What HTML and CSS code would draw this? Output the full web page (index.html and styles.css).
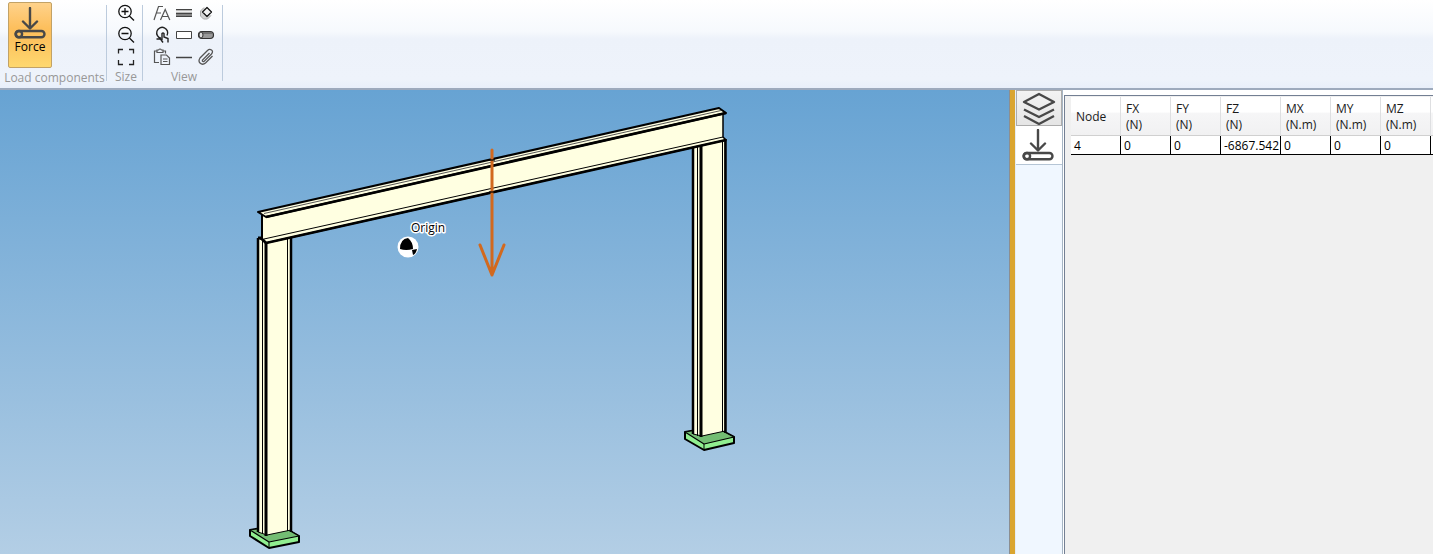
FILE: index.html
```html
<!DOCTYPE html>
<html lang="en">
<head>
<meta charset="utf-8">
<title>Load editor</title>
<link rel="stylesheet" href="styles.css">
</head>
<body>
<svg width="0" height="0" class="defs" aria-hidden="true">
  <symbol id="force" viewBox="0 0 32 32">
    <g fill="none" stroke="#484848" stroke-width="2.4" stroke-linecap="round" stroke-linejoin="round">
      <path d="M16 1V21M9 14.500L16 21.500L23 14.500"/>
      <rect x="1.500" y="24" width="29" height="6.200" rx="3.100"/>
      <circle cx="5" cy="27.100" r="3.100"/>
    </g>
  </symbol>
</svg>
<header class="ribbon">
  <section class="group group-load">
    <div class="group-body">
      <button class="force" type="button"><svg width="32" height="32"><use href="#force"/></svg><span>Force</span></button>
    </div>
    <div class="group-label">Load components</div>
  </section>
  <section class="group group-size">
    <div class="group-body tools">
      <button class="tool" type="button" aria-label="Zoom in"><svg viewBox="0 0 18 18"><g fill="none" stroke="#111" stroke-width="1.300"><circle cx="8" cy="7.500" r="6.200"/><path d="M12.400 12L17 16.500M4.500 7.500H11.500M8 4V11"/></g></svg></button>
      <button class="tool" type="button" aria-label="Zoom out"><svg viewBox="0 0 18 18"><g fill="none" stroke="#111" stroke-width="1.300"><circle cx="8" cy="7.500" r="6.200"/><path d="M12.400 12L17 16.500M4.500 7.500H11.500"/></g></svg></button>
      <button class="tool" type="button" aria-label="Fit"><svg viewBox="0 0 18 18"><path d="M1.500 5.500V1.500H6M12 1.500H16.500V5.500M16.500 12V16.500H12M6 16.500H1.500V12" fill="none" stroke="#222" stroke-width="1.300"/></svg></button>
    </div>
    <div class="group-label">Size</div>
  </section>
  <section class="group group-view">
    <div class="group-body tools tools-view">
      <button class="tool" type="button" aria-label="Text size"><svg viewBox="0 0 18 18"><path d="M1 16L5.500 2.500H10M3.300 9H8M7.500 16L12.200 5.500L16.800 16M9.300 12.500H15" fill="none" stroke="#555" stroke-width="1.200"/></svg></button>
      <button class="tool" type="button" aria-label="Shaded"><svg viewBox="0 0 18 18"><path d="M1 5H17V13H1Z" fill="#858585"/><path d="M1 7.500H17" stroke="#eee" stroke-width="2"/><path d="M1 5.500H17M1 12.500H17M1 9.500H17" stroke="#444"/></svg></button>
      <button class="tool" type="button" aria-label="Node"><svg viewBox="0 0 18 18"><path d="M7 3.500L3.500 7V12L6.500 15H10.500L14 11.500" fill="#d4d4d4" stroke="#aaa"/><path d="M10 3.500L14.500 8L10 12.500L5.500 8Z" fill="#f2f2f2" stroke="#111" stroke-width="1.200" stroke-linejoin="round"/></svg></button>
      <button class="tool" type="button" aria-label="Select"><svg viewBox="0 0 18 18"><g fill="none" stroke="#222" stroke-width="1.400"><path d="M8 12.200A5.500 5.500 0 1 1 14 9.500M3.500 13H7.500"/><path d="M9 14V7.500Q10 6.500 11 7.500V11L15 12.500V16.500M9 13.500L7.500 13L10 16.500"/></g></svg></button>
      <button class="tool" type="button" aria-label="Outline"><svg viewBox="0 0 18 18"><path d="M1.500 5.500H16.500V12.500H1.500Z" fill="#fff" stroke="#444"/></svg></button>
      <button class="tool" type="button" aria-label="Solid"><svg viewBox="0 0 18 18"><rect x="1.500" y="5.500" width="15" height="7" rx="3.500" fill="#999" stroke="#333" stroke-width="1.200"/><path d="M5 7H15" stroke="#666" stroke-width="1.500"/><ellipse cx="4" cy="9" rx="2" ry="3" fill="#ddd" stroke="#333"/></svg></button>
      <button class="tool" type="button" aria-label="Paste"><svg viewBox="0 0 18 18"><g fill="none" stroke="#555" stroke-width="1.200"><path d="M6 14.500H1.500V3H4M10 3H12.500V5.500M4 4.500H10V2H8.500Q7 0 5.500 2H4Z"/><path d="M8 7H13.500L16.500 10V16.500H8ZM10 11H14.500M10 13.500H14.500"/></g></svg></button>
      <button class="tool" type="button" aria-label="Line"><svg viewBox="0 0 18 18"><path d="M1 9.500H17" stroke="#444" stroke-width="1.500"/></svg></button>
      <button class="tool" type="button" aria-label="Attach"><svg viewBox="0 0 18 18"><path d="M12.500 5L5.500 12Q5 14 7 13.500L14.500 6Q16.500 3.500 14.500 2Q12.500 .5 10.500 2.500L3 10Q1 13 3 15Q5.500 17.500 8.500 15L15.500 8" fill="none" stroke="#555" stroke-width="1.300"/></svg></button>
    </div>
    <div class="group-label">View</div>
  </section>
</header>
<main class="workspace">
  <div class="viewport">
    <svg class="scene" viewBox="0 90 1009 464" preserveAspectRatio="xMidYMin slice" role="img" aria-label="Portal frame with a downward force">
      <g stroke="#000" stroke-linejoin="round" stroke-width="2">
        <g id="base-left">
          <path d="M250 530L280 525L299 536V542L269 548L250 536Z" fill="#90ee90"/>
          <path d="M250 530L280 525L299 536L269 542Z" fill="#73bd73" stroke-width="1.200"/>
          <path d="M269 542V548" stroke-width="1"/>
        </g>
        <g id="base-right">
          <path d="M685 432L715 427L734 437V443L704 450L685 439Z" fill="#90ee90"/>
          <path d="M685 432L715 427L734 437L704 444Z" fill="#73bd73" stroke-width="1.200"/>
          <path d="M704 444V450" stroke-width="1"/>
        </g>
        <path d="M258 238L266 242L291 237V530L267 535L258 532Z" fill="#ffffe1" stroke-width="1"/>
        <path d="M258 238V532M291 237V532" stroke-width="2.500"/>
        <path d="M266 242V536" stroke-width="3"/>
        <path d="M262.500 240V534M287.500 238V531" stroke-width="1"/>
        <path d="M693 146L701 146L725 139V431L702 436L693 434Z" fill="#ffffe1" stroke-width="1"/>
        <path d="M693 146V434M725.500 139V433" stroke-width="2.500"/>
        <path d="M701 146V437" stroke-width="3"/>
        <path d="M697.500 147V436M722.500 141V432" stroke-width="1"/>
        <path d="M262 213L723 111V137L726 140L266 243L262 239Z" fill="#ffffe1" stroke-width="1.500"/>
        <path d="M262 214V240" stroke-width="2"/>
        <path d="M264 239L723 137" stroke-width="1"/>
        <path d="M258 238L261 238L266 243L726 140" fill="none" stroke-width="2.800"/>
        <path d="M258 212L719 108L726 113L266 217Z" fill="#ffffe1"/>
        <path d="M264 213.500L721 110.500" stroke-width="1" stroke="#555"/>
        <path d="M266 217L726 113" stroke-width="2.800"/>
      </g>
      <path d="M492 150V275M480 245L492 275L504 245" fill="none" stroke="#d2691e" stroke-width="3" stroke-linecap="round" stroke-linejoin="round"/>
      <path d="M489 160H495M489 192H495" stroke="#000" stroke-width="2" opacity=".6"/>
      <circle cx="408" cy="247" r="10.500" fill="#fff"/>
      <path d="M400 249Q400 239 408 238Q413 242 413 249Q406 251 400 249ZM412 250L417 249Q416 254 413 255Z"/>
      <text x="411" y="232" class="origin">Origin</text>
    </svg>
  </div>
  <div class="splitter"></div>
  <nav class="tabs">
    <button class="tab tab-layers" type="button" aria-label="Layers"><svg width="34" height="34" viewBox="0 0 34 34"><path d="M17 3L32 11L17 18.500L2 11ZM2 18.500L17 26L32 18.500M2 25L17 33L32 25" fill="none" stroke="#484848" stroke-width="2.300" stroke-linejoin="round"/></svg></button>
    <button class="tab tab-active" type="button" aria-label="Forces"><svg width="32" height="32"><use href="#force"/></svg></button>
  </nav>
  <section class="panel">
    <div class="grid">
      <table>
        <colgroup><col class="node"><col class="value"><col class="value"><col class="wide"><col class="value"><col class="value"><col class="value"><col></colgroup>
        <thead><tr><th>Node</th><th>FX<br>(N)</th><th>FY<br>(N)</th><th>FZ<br>(N)</th><th>MX<br>(N.m)</th><th>MY<br>(N.m)</th><th>MZ<br>(N.m)</th><th></th></tr></thead>
        <tbody><tr><td>4</td><td>0</td><td>0</td><td>-6867.542</td><td>0</td><td>0</td><td>0</td><td></td></tr></tbody>
      </table>
    </div>
  </section>
</main>
</body>
</html>
```

FILE: styles.css
```css
* { box-sizing: border-box; }
body {
  margin: 0;
  min-height: 100vh;
  display: flex;
  flex-direction: column;
  font: 12px/16px "Open Sans", "Noto Sans", sans-serif;
  color: #1a1a1a;
  background: #fff;
}
button { font: inherit; color: inherit; padding: 0; border: 0; background: none; }
.defs { display: none; }

.ribbon {
  display: flex;
  height: 90px;
  padding: 2px 0 3px;
  background: linear-gradient(#fff, #f6f9fd 36%, #edf2fa 44%, #eef3fb 90%, #e8effa);
  border-bottom: 2px solid #9daabd;
}
.group { display: flex; flex-direction: column; position: relative; }
.group::after {
  content: "";
  position: absolute;
  right: 0;
  top: 3px;
  bottom: 4px;
  width: 1px;
  background: #bccbdd;
}
.group-load { width: 107px; }
.group-size { width: 36px; }
.group-view { width: 80px; }
.group-body { height: 66px; }
.group-label { padding: 2px 0 0 2px; color: #989898; text-align: center; white-space: nowrap; }
.force {
  display: flex;
  flex-direction: column;
  align-items: center;
  width: 44px;
  height: 66px;
  margin-left: 8px;
  padding-top: 4px;
  border: 1px solid #c2a266;
  border-radius: 2px;
  background: linear-gradient(#fed28b, #fdbf5c 40%, #fcc35f 60%, #fed86f);
  color: #000;
}
.tools {
  display: grid;
  grid-template-columns: 18px;
  grid-auto-rows: 18px;
  gap: 4px;
  justify-content: center;
  padding: 2px 0 0 2px;
}
.tools-view { grid-template-columns: repeat(3, 18px); }
.tool, .tool svg { display: block; width: 18px; height: 18px; }

.workspace { flex: 1; display: grid; grid-template-columns: minmax(0, 1009fr) 7px 47px minmax(0, 370fr); }
.viewport { position: relative; overflow: hidden; background: linear-gradient(#67a3d3, #b3cee5); }
.scene { position: absolute; inset: 0; width: 100%; height: 100%; }
.origin { font-size: 12px; fill: #000; stroke: #fff; stroke-width: 3px; stroke-linejoin: round; paint-order: stroke; }
.splitter { background: #daa530; border-left: 1px solid #8b8e91; border-right: 1px solid #e5edf5; }
.tabs { background: #f0f7ff; border-right: 1px solid #a6b5c4; }
.tab { display: flex; align-items: center; justify-content: center; width: 100%; }
.tab-layers { height: 36px; border: 1px solid #acacac; background: linear-gradient(#f3f3f3, #e5e5e5); }
.tab-active { height: 39px; padding-right: 2px; background: #fff; border-bottom: 1px solid #b5c5d5; }
.panel { display: flex; padding: 5px 0 0 1px; }
.grid { flex: 1; min-width: 0; padding: 1px 0 0 6px; border: solid #737f93; border-width: 1px 0 0 1px; background: #f0f0f0; }
table { width: 100%; table-layout: fixed; border-collapse: separate; border-spacing: 0; }
.node, .value { width: 50px; }
.wide { width: 60px; }
th {
  height: 39px;
  padding: 4px 5px 2px;
  font-weight: normal;
  text-align: left;
  background: linear-gradient(#fff 40%, #f6f6f7 42%, #f1f1f2);
  border-right: 1px solid #dedfe1;
  border-bottom: 1px solid #d0d0d0;
}
td { height: 19px; padding: 2px 3px 0; color: #000; background: #fff; border-right: 1px solid #000; border-bottom: 1px solid #000; white-space: nowrap; }
th:last-child, td:last-child { border-right: 0; padding: 0; }
```
